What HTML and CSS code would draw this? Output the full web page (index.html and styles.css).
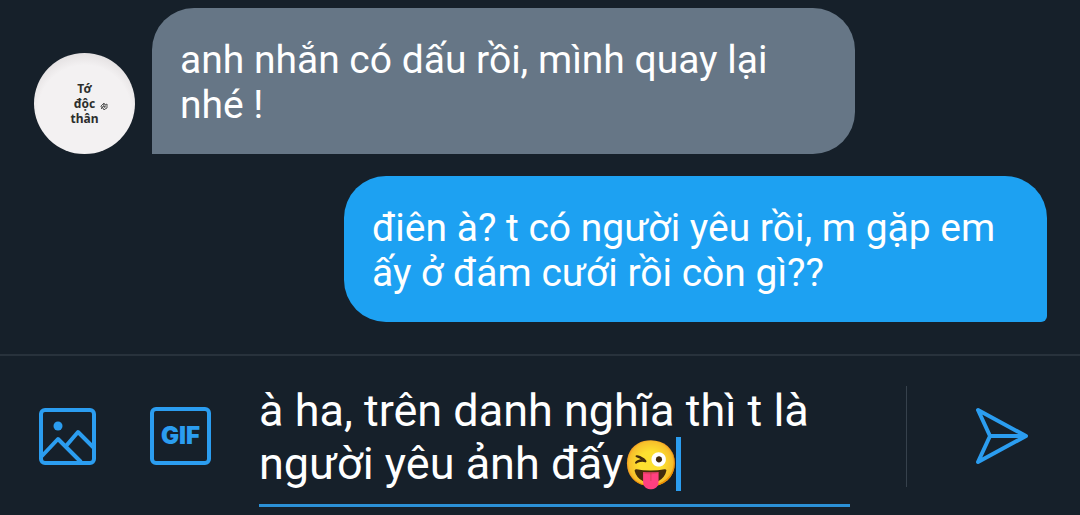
FILE: index.html
```html
<!DOCTYPE html>
<html lang="vi">
<head>
<meta charset="utf-8">
<meta name="viewport" content="width=device-width, initial-scale=1">
<title>Tin nhắn</title>
<link rel="stylesheet" href="styles.css">
</head>
<body>
<main class="thread">
  <div class="row">
    <div class="avatar"><span>Tớ</span><span>độc</span><span>thân</span>
      <svg class="avatar-mark" viewBox="0 0 8 10" aria-hidden="true"><path d="M1 5l3-3 1 2 2-1v4l-2 1-1 1-1-2-2-1zM2 6l4-1M3 3l2 4M1 8l2-2" /></svg>
    </div>
    <p class="bubble bubble-in">anh nhắn có dấu rồi, mình quay lại nhé !</p>
  </div>
  <div class="row row-out">
    <p class="bubble bubble-out">điên à? t có người yêu rồi, m gặp em ấy ở đám cưới rồi còn gì??</p>
  </div>
</main>
<form class="composer">
  <button class="tool" type="button" aria-label="Ảnh">
    <svg class="photo" viewBox="0 0 58 58" aria-hidden="true">
      <rect x="3" y="3" width="53" height="53" rx="4"/>
      <path d="M3 50L20 32L43 55M28 39L40 25L56 41"/>
      <circle cx="20" cy="19" r="4.5"/>
    </svg>
  </button>
  <button class="tool gif" type="button">GIF</button>
  <div class="field">
    <textarea class="input" rows="2" aria-label="Tin nhắn" spellcheck="false">à ha, trên danh nghĩa thì t là người yêu ảnh đấy😜</textarea>
    <span class="caret"></span>
  </div>
  <div class="send-area">
    <button class="send" type="submit" aria-label="Gửi">
      <svg viewBox="0 0 54 58" aria-hidden="true"><path d="M3 3L51 29L3 55L15 29ZM15 29H51"/></svg>
    </button>
  </div>
</form>
</body>
</html>
```
FILE: styles.css
```css
* {
  box-sizing: border-box;
}

body {
  margin: 0;
  min-height: 100vh;
  display: flex;
  flex-direction: column;
  background: #16202a;
  color: #fff;
  font-family: Roboto, "Noto Sans", sans-serif;
  overflow: hidden;
}

.thread {
  flex: 1;
  display: flex;
  flex-direction: column;
  gap: 22px;
  padding: 8px 33px 32px 34px;
}

.row {
  display: flex;
  align-items: flex-end;
  gap: 17px;
}

.row-out {
  justify-content: flex-end;
}

.avatar {
  position: relative;
  display: flex;
  flex-direction: column;
  align-items: center;
  justify-content: center;
  flex: none;
  width: 101px;
  height: 101px;
  border-radius: 50%;
  background: radial-gradient(circle at 50% 58%, #f3f1f2 60%, #cdc8c9 100%);
  color: #2c2e2d;
  font: 700 12px/15px "Noto Sans", sans-serif;
}

.avatar-mark {
  position: absolute;
  left: 66px;
  top: 48px;
  width: 8px;
  height: 10px;
  fill: none;
  stroke: #555;
  stroke-width: 1;
}

.bubble {
  width: 70%;
  max-width: 703px;
  margin: 0;
  padding: 30px 28px 26px;
  font-size: 39px;
  line-height: 45px;
}

.bubble-in {
  border-radius: 42px 42px 42px 0;
  background: #667686;
}

.bubble-out {
  border-radius: 42px 42px 6px 42px;
  background: #1da1f2;
}

.composer {
  display: flex;
  align-items: flex-start;
  border-top: 2px solid #28323c;
  padding: 28px 51px 8px 37px;
}

button {
  border: 0;
  padding: 0;
  background: none;
  color: #2b9df0;
}

.tool {
  flex: none;
  width: 60px;
  height: 58px;
  margin-top: 23px;
}

svg {
  display: block;
}

.photo,
.send svg {
  width: 100%;
  height: 100%;
  fill: none;
  stroke: currentColor;
  stroke-width: 4;
  stroke-linejoin: round;
}

.photo circle {
  fill: currentColor;
  stroke: none;
}

.gif {
  width: 61px;
  margin-left: 53px;
  border: 4px solid currentColor;
  border-radius: 6px;
  font: 900 24px/30px Inter, sans-serif;
}

.field {
  position: relative;
  flex: 1;
  margin-left: 48px;
  border-bottom: 3px solid #2b90d6;
}

.input {
  display: block;
  width: 100%;
  height: 120px;
  border: 0;
  padding: 0;
  background: none;
  color: inherit;
  font: 45px/53px Roboto, "Noto Sans", sans-serif;
  outline: 0;
  resize: none;
  overflow: hidden;
}

.caret {
  position: absolute;
  left: 417px;
  top: 53px;
  width: 5px;
  height: 54px;
  background: #2b9df0;
}

.send-area {
  flex: none;
  margin: 2px 0 0 56px;
  border-left: 1px solid #36414c;
  padding: 21px 0 22px 68px;
}

.send {
  display: block;
  width: 54px;
  height: 58px;
}
```
